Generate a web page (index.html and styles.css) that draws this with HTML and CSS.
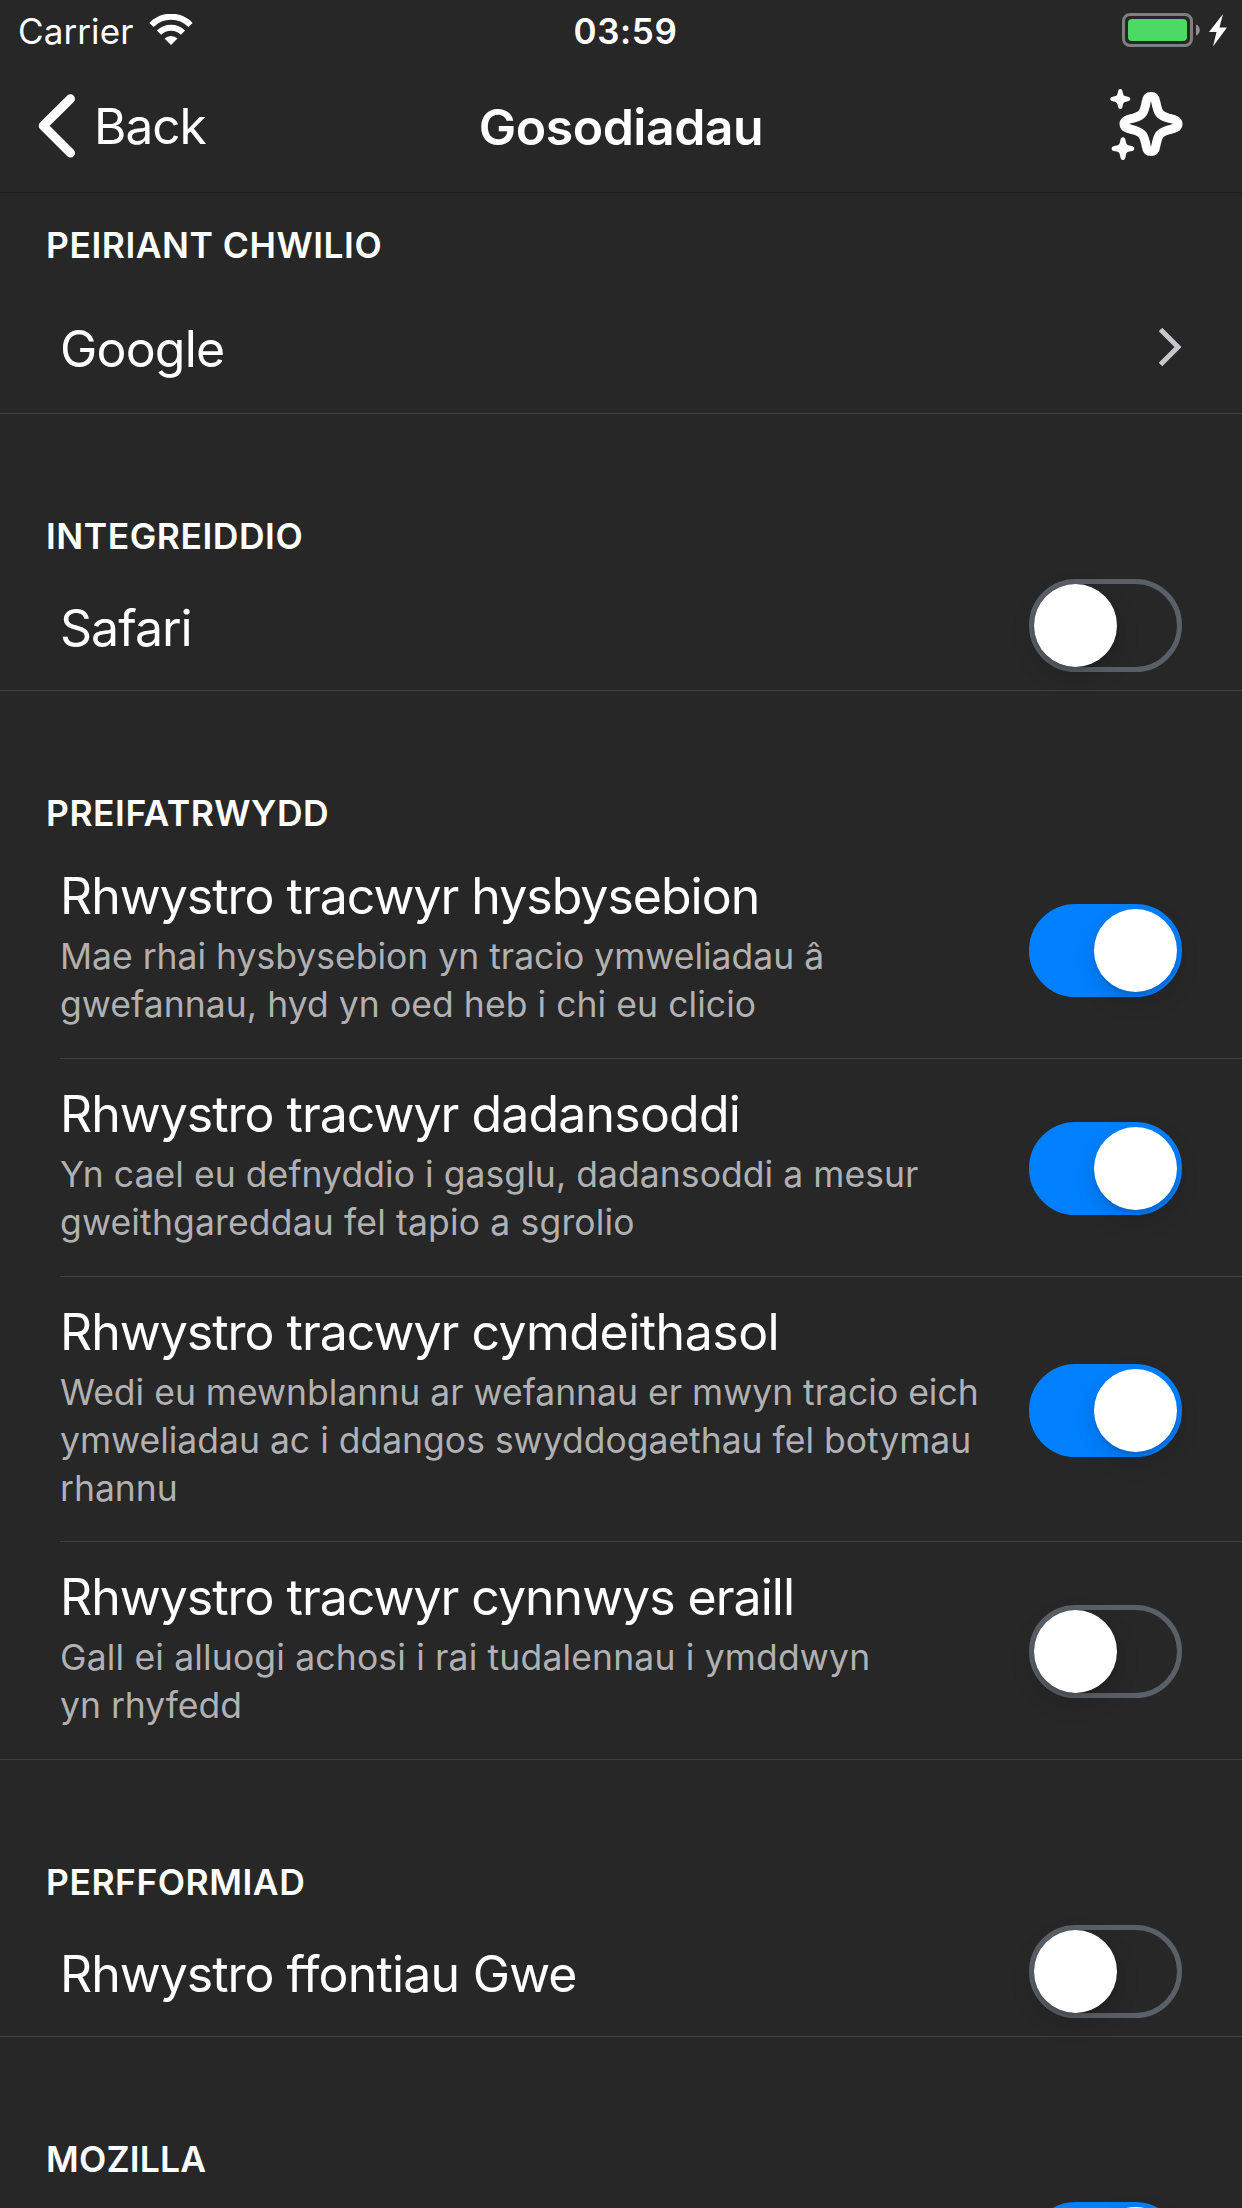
FILE: index.html
```
<!DOCTYPE html>
<html lang="cy">
<head>
<meta charset="utf-8">
<title>Gosodiadau</title>
<link rel="stylesheet" href="styles.css">
</head>
<body>
<header class="top">
  <div class="status">
    <div class="status-left"><span class="carrier">Carrier</span>
      <svg class="wifi" width="44" height="32" viewBox="0 0 44 32"><g fill="none" stroke="#fff" stroke-width="6"><path d="M2.500 11A27 27 0 0 1 41.500 11"/><path d="M10 18.700A17 17 0 0 1 34 18.700"/></g><path d="M22 31L15.500 24.500A9.500 9.500 0 0 1 28.500 24.500Z" fill="#fff"/></svg>
    </div>
    <span class="time">03:59</span>
    <svg class="battery" width="108" height="36" viewBox="0 0 108 36"><rect x="1.500" y="1.500" width="68" height="31" rx="6.500" fill="none" stroke="#7f7f7f" stroke-width="3"/><rect x="6" y="6" width="59" height="22" rx="4" fill="#4cd964"/><path d="M74 11.500C79 13 79 21 74 22.500Z" fill="#929292"/><path d="M101 1L87 19H94.500L91 33.500L105 14.500H97.500Z" fill="#fff"/></svg>
  </div>
  <div class="nav">
    <div class="back"><svg width="38" height="64" viewBox="0 0 38 64"><path d="M33.500 4.800L6.200 31.800L33.500 59" fill="none" stroke="#fff" stroke-width="9" stroke-linecap="round" stroke-linejoin="round"/></svg><span class="back-label">Back</span></div>
    <h1 class="title">Gosodiadau</h1>
    <svg class="spark" width="74" height="74" viewBox="0 0 74 74"><path d="M41 8.500C44 8.500 45.300 10.500 45.800 14C48 25 49 27 58 30C64 31.500 68 32 68 36C68 40 64 40.500 58 42C49 45 48 47 45.800 58C45.300 61.500 44 63.500 41 63.500C38 63.500 36.700 61.500 36.200 58C34 47 33 45 24 42C18 40.500 14 40 14 36C14 32 18 31.500 24 30C33 27 34 25 36.200 14C36.700 10.500 38 8.500 41 8.500Z" fill="none" stroke="#fff" stroke-width="9"/><g fill="#fff"><path id="s" d="M10.300 1C12 1 12.300 2 12.800 4.500C13.300 7.500 14 8 17 8.500C19.500 9 20.300 9.500 20.300 11C20.300 12.500 19.500 13 17 13.400C14 14 13.300 14.500 12.800 17.500C12.300 20 12 21 10.300 21C8.600 21 8.300 20 7.800 17.500C7.300 14.500 6.500 14 3.600 13.400C1.100 13 .3 12.500 .3 11C.3 9.500 1.100 9 3.600 8.500C6.500 8 7.300 7.500 7.800 4.500C8.300 2 8.600 1 10.300 1Z"/><use href="#s" transform="translate(1.300 48.200) scale(1.130)"/></g></svg>
  </div>
</header>
<main>
  <section class="group g-search">
    <h2 class="heading">PEIRIANT CHWILIO</h2>
    <div class="row last"><div class="text"><div class="name wide">Google</div></div><svg class="chevron" width="24" height="40" viewBox="0 0 24 40"><path d="M2.500 2.500L20 20L2.500 37.500" fill="none" stroke="#c7c7cc" stroke-width="5"/></svg></div>
  </section>
  <section class="group g-safari">
    <h2 class="heading">INTEGREIDDIO</h2>
    <div class="row last"><div class="text"><div class="name">Safari</div></div><span class="switch"></span></div>
  </section>
  <section class="group g-privacy">
    <h2 class="heading">PREIFATRWYDD</h2>
    <div class="row detail"><div class="text"><div class="name">Rhwystro tracwyr hysbysebion</div><p class="desc"><span class="tight">Mae rhai hysbysebion yn tracio ymweliadau â</span><br>gwefannau, hyd yn oed heb i chi eu clicio</p></div><span class="switch on"></span></div>
    <div class="row detail"><div class="text"><div class="name">Rhwystro tracwyr <span class="wide">dadansoddi</span></div><p class="desc">Yn cael eu defnyddio i gasglu, dadansoddi a mesur<br><span class="loose">gweithgareddau fel tapio a sgrolio</span></p></div><span class="switch on"></span></div>
    <div class="row detail tall"><div class="text"><div class="name">Rhwystro tracwyr <span class="wider">cymdeithasol</span></div><p class="desc tight">Wedi eu mewnblannu ar wefannau er mwyn tracio eich<br>ymweliadau ac i ddangos swyddogaethau fel botymau<br>rhannu</p></div><span class="switch on"></span></div>
    <div class="row detail last"><div class="text"><div class="name">Rhwystro tracwyr cynnwys eraill</div><p class="desc"><span class="loose">Gall ei alluogi achosi i rai tudalennau i ymddwyn</span><br><span class="tight">yn rhyfedd</span></p></div><span class="switch"></span></div>
  </section>
  <section class="group g-perf">
    <h2 class="heading">PERFFORMIAD</h2>
    <div class="row last"><div class="text"><div class="name">Rhwystro <span class="wide">ffontiau Gwe</span></div></div><span class="switch"></span></div>
  </section>
  <section class="group g-mozilla">
    <h2 class="heading">MOZILLA</h2>
    <div class="row last"><div class="text"></div><span class="switch on"></span></div>
  </section>
</main>
</body>
</html>
```
FILE: styles.css
```
* { box-sizing: border-box; }
body { margin: 0; width: 1242px; height: 2208px; overflow: hidden; background: #272727; color: #fff; font-family: Inter, "Liberation Sans", sans-serif; font-weight: 370; }
h1, h2, p { margin: 0; }
svg { display: block; flex: none; }
.top { height: 193px; border-bottom: 1px solid #1b1b1b; }
.status { height: 60px; display: grid; grid-template-columns: 1fr auto 1fr; padding: 0 12px 0 18px; }
.status-left { display: flex; gap: 15px; }
.carrier { font-size: 35px; line-height: 63px; letter-spacing: .1px; width: 116px; }
.wifi { margin-top: 14px; }
.time { font-size: 35px; line-height: 63px; font-weight: 580; letter-spacing: .6px; margin-left: 3px; }
.battery { justify-self: end; margin-top: 13px; }
.nav { height: 132px; display: grid; grid-template-columns: 1fr auto 1fr; padding: 0 37px; }
.back { display: flex; gap: 19px; padding-top: 34px; }
.back-label { font-size: 49.500px; line-height: 65px; letter-spacing: -1px; }
.title { font-size: 50px; line-height: 66px; padding-top: 34px; font-weight: 600; letter-spacing: -.5px; }
.spark { justify-self: end; margin: 28px 21px 0 0; }
.heading { font-size: 35.500px; line-height: 44px; font-weight: 600; padding-left: 46px; height: 45px; letter-spacing: .5px; }
.g-search { padding-top: 31px; }
.g-safari, .g-privacy, .g-perf, .g-mozilla { padding-top: 101px; }
.g-mozilla .heading { letter-spacing: .2px; }
.row { display: flex; justify-content: space-between; align-items: center; height: 131px; padding-right: 60px; margin-left: 60px; border-bottom: 1px solid #404040; }
.row.last { margin-left: 0; padding-left: 60px; }
.g-search .heading { height: 55px; }
.g-search .row { height: 135px; }
.g-privacy .heading { height: 49px; }
.row.detail { height: 218px; }
.row.detail.tall { height: 265px; }
.name { font-size: 50px; line-height: 60px; letter-spacing: -1px; white-space: nowrap; padding-top: 6px; }
.wide { letter-spacing: -.8px; }
.wider { letter-spacing: -.5px; }
.detail .text { padding-bottom: 5px; }
.tall .text { padding-bottom: 3px; }
.detail .name { padding: 0 0 7px; }
.desc { font-size: 35.500px; line-height: 48px; letter-spacing: .06px; color: #b1b1b3; white-space: nowrap; }
.tight { letter-spacing: 0; }
.loose { letter-spacing: .16px; }
.chevron { margin-top: 1px; }
.switch { flex: none; width: 153px; height: 93px; margin-top: 1px; border: 5px solid #5a6067; border-radius: 47px; }
.detail .switch { margin-top: 2px; }
.switch::after { content: ""; display: block; width: 83px; height: 83px; border-radius: 50%; background: #fff; box-shadow: 0 9px 24px rgba(0,0,0,.15), 0 3px 3px rgba(0,0,0,.1); }
.switch.on { background: #0080ff; border-color: #0080ff; }
.switch.on::after { margin-left: 60px; }
```
